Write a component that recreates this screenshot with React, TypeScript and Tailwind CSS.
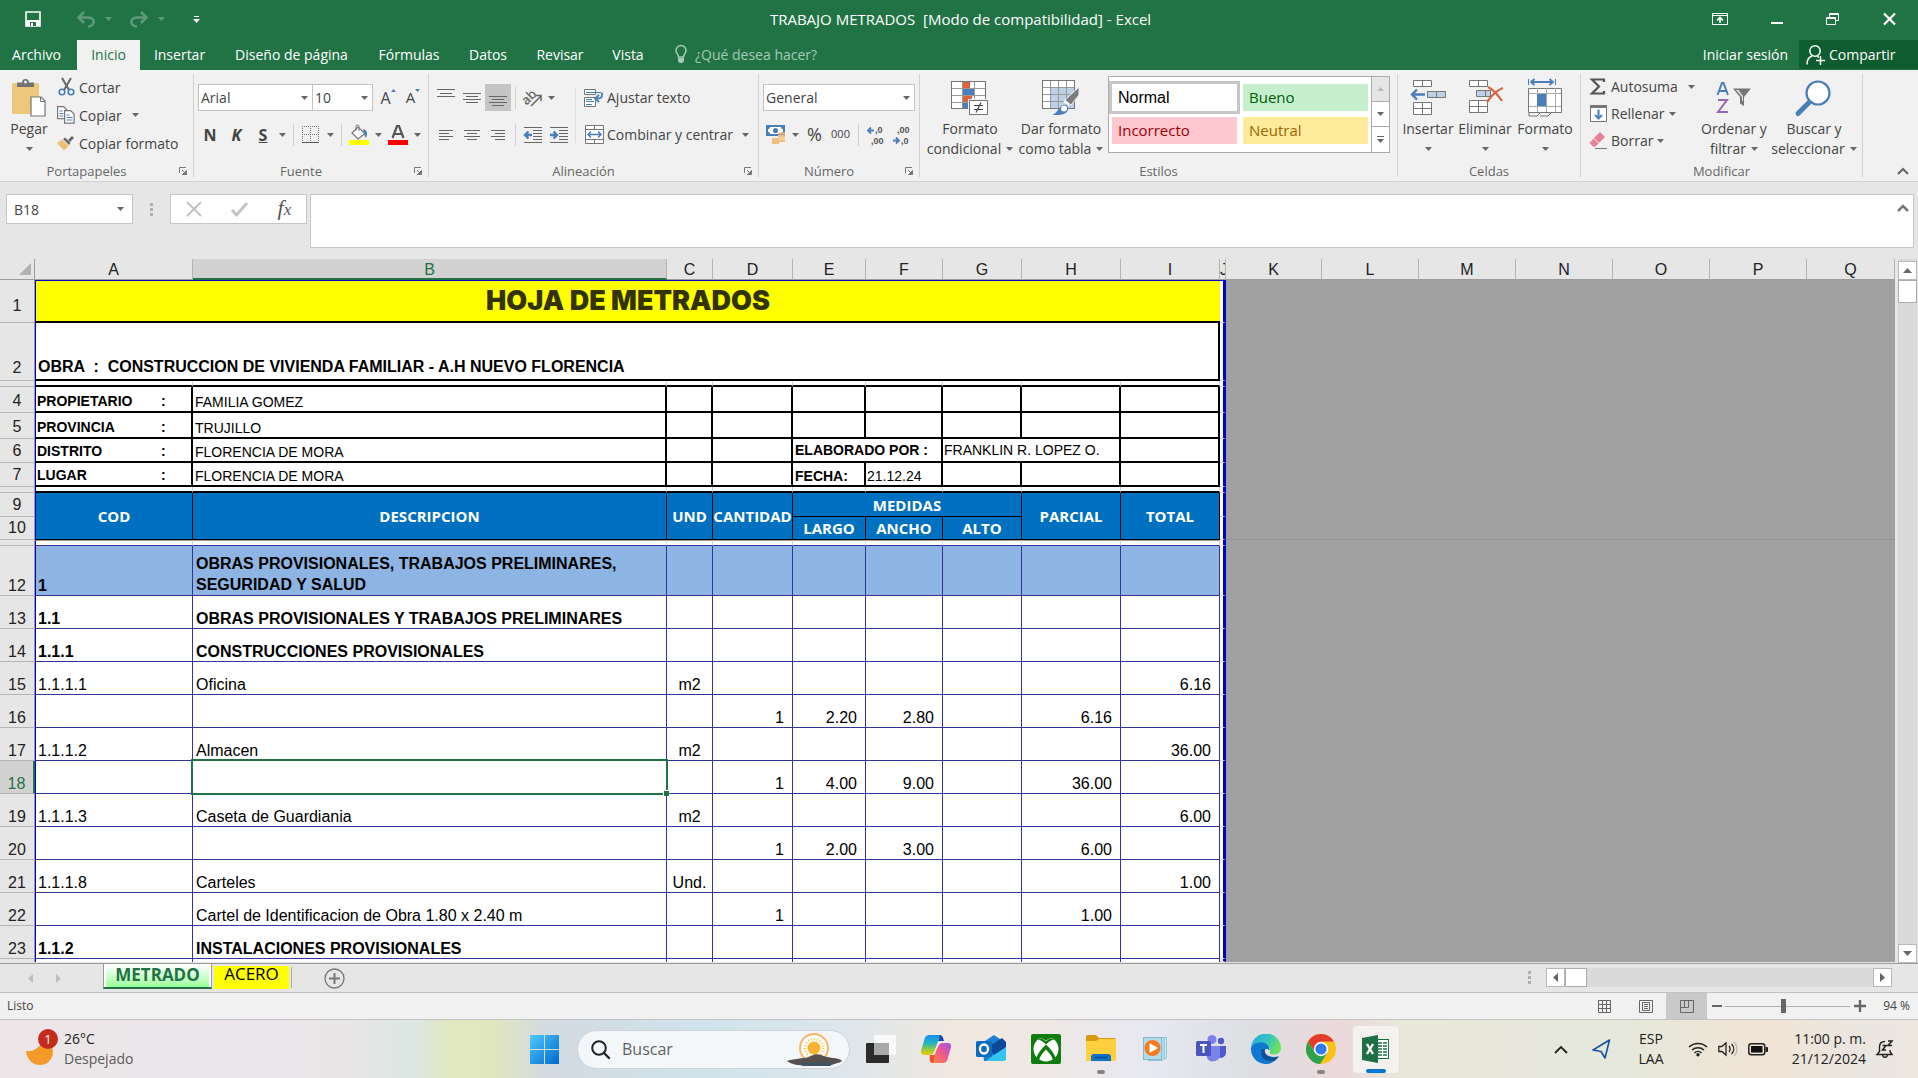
import React from "react";
import clsx from "clsx";

type Kids = { children?: React.ReactNode };

const UI = "font-['Open_Sans',sans-serif]";
const SHEET = "font-['Liberation_Sans',Arial,sans-serif]";

/* ---------- small shared pieces ---------- */

function Caret({ className = "text-[#666]" }: { className?: string }) {
  return (
    <svg width="7" height="4" viewBox="0 0 7 4" className={clsx("shrink-0", className)} aria-hidden="true">
      <path d="M0 0h7L3.500 4z" fill="currentColor" />
    </svg>
  );
}

function Svg({ w, h, children, className }: { w: number; h: number; className?: string } & Kids) {
  return (
    <svg width={w} height={h} viewBox={`0 0 ${w} ${h}`} fill="none" className={clsx("shrink-0 overflow-visible", className)} aria-hidden="true">
      {children}
    </svg>
  );
}

function IconButton({ label, className, children }: { label: string; className: string } & Kids) {
  return (
    <button type="button" aria-label={label} className={clsx("flex h-[27px] shrink-0 items-center justify-center", className)}>
      {children}
    </button>
  );
}

function Divider({ className }: { className: string }) {
  return <span className={clsx("h-[22px] w-px shrink-0 bg-[#d0d0d0]", className)} />;
}

function Group({ label, width, launcher, children }: { label: string; width: string; launcher?: boolean } & Kids) {
  return (
    <>
      <section aria-label={label} className={clsx("flex shrink-0 flex-col", width)}>
        <div className="flex h-[92px]">{children}</div>
        <div className="flex h-[18px] items-center">
          <span className="grow text-center text-[13px] leading-[18px] text-[#666]">{label}</span>
          {launcher && (
            <button type="button" aria-label={`Opciones de ${label}`} className="flex w-5 justify-center">
              <Svg w={8} h={8}>
                <path d="M.5 6V.5H7" stroke="#777" />
                <path d="M3 3l3 3M7.500 3.500v4h-4z" stroke="#777" fill="#777" />
              </Svg>
            </button>
          )}
        </div>
      </section>
      <span className="mt-1 h-[103px] w-px shrink-0 bg-[#d2d2d2]" />
    </>
  );
}

function BigButton({ icon, line1, line2, width }: { icon: React.ReactNode; line1: string; line2?: string; width: string }) {
  return (
    <button type="button" className={clsx("flex shrink-0 flex-col items-center pt-[6px] whitespace-nowrap", width)}>
      <span className="flex h-[43px] items-center justify-center">{icon}</span>
      <span className="text-[14px] leading-5">{line1}</span>
      <span className="flex h-5 items-center justify-center gap-[5px] text-[14px] leading-5">
        {line2}
        <Caret className="text-[#666]" />
      </span>
    </button>
  );
}

function SmallButton({ icon, label, caret, height }: { icon: React.ReactNode; label: string; caret?: string; height: string }) {
  return (
    <button type="button" className={clsx("flex items-center gap-1 text-[14px] whitespace-nowrap", height)}>
      <span className="flex w-[18px] justify-center">{icon}</span>
      <span>{label}</span>
      {caret && (
        <span className={caret}>
          <Caret />
        </span>
      )}
    </button>
  );
}

/* ---------- ribbon icons ---------- */

const G = "#767676";
const B = "#4a7ebb";

function PasteIcon() {
  return (
    <Svg w={36} h={40}>
      <rect x="1" y="5" width="27" height="31" rx="1.500" fill="#ecc77c" />
      <path d="M6 9V4.500h5a3.500 3.500 0 0 1 7 0h5V9z" fill="#737373" />
      <circle cx="14.500" cy="4" r="1.600" fill="#f1f1f1" />
      <path d="M20 19h10l4 4v15H20z" fill="#fff" stroke={G} strokeWidth="1.200" />
      <path d="M29.500 19v4.500H34" stroke={G} />
    </Svg>
  );
}
function CutIcon() {
  return (
    <Svg w={17} h={18}>
      <path d="M4 0l7 12M13 0L6 12" stroke="#666" strokeWidth="2" />
      <circle cx="4" cy="14" r="2.800" stroke={B} strokeWidth="1.600" />
      <circle cx="13" cy="14" r="2.800" stroke={B} strokeWidth="1.600" />
    </Svg>
  );
}
function CopyIcon() {
  return (
    <Svg w={18} h={18}>
      <path d="M.6.600h6l3 3v9h-9z" fill="#fff" stroke={G} strokeWidth="1.200" />
      <path d="M2.500 5h3M2.500 7.500h4M2.500 10h4" stroke={B} />
      <path d="M7.600 4.600h6l3.500 3.500v9H7.600z" fill="#fff" stroke={G} strokeWidth="1.200" />
      <path d="M9.500 9h3M9.500 11.500h6M9.500 14h6" stroke={B} />
    </Svg>
  );
}
function PainterIcon() {
  return (
    <Svg w={18} h={16}>
      <path d="M0 8l5-3.500 7 6.500-5 4.500z" fill="#ecc07a" />
      <path d="M6 4l2-1.500 5.500 5.500-1.500 2z" fill="#666" />
      <path d="M11 5l4-4 2 2-4 4z" fill="#666" />
    </Svg>
  );
}
function LinesIcon({ rows, w = 18 }: { rows: [number, number, number][]; w?: number }) {
  return (
    <Svg w={w} h={18}>
      {rows.map(([x1, x2, y]) => (
        <path key={y} d={`M${x1} ${y}.5H${x2}`} stroke="#666" />
      ))}
    </Svg>
  );
}
function BordersIcon() {
  return (
    <Svg w={17} h={17}>
      <path d="M0 .5h17M0 8.500h17M.5 0v16M8.500 0v16M16.500 0v16" stroke="#777" strokeDasharray="1 1" />
      <path d="M0 16.500h17" stroke="#555" />
    </Svg>
  );
}
function BucketIcon() {
  return (
    <Svg w={20} h={20}>
      <path d="M3 8l6-6 7 6.500-7 5.500z" fill="#fff" stroke={G} strokeWidth="1.200" />
      <path d="M7 6V1.500a1.500 1.500 0 0 1 3 0V6" stroke={G} />
      <path d="M14 4c4 1 5 4 3 9-1-2-2-3-2-5z" fill={B} />
      <path d="M0 15h20v5H0z" fill="#ff0" />
    </Svg>
  );
}
function FontColorIcon() {
  return (
    <Svg w={20} h={20}>
      <path d="M4.500 13L9 1h2l4.500 12M6.300 9h7.400" stroke="#555" strokeWidth="2.200" />
      <path d="M0 15h20v5H0z" fill="#f00" />
    </Svg>
  );
}
function OrientationIcon() {
  return (
    <Svg w={20} h={18}>
      <text x="-1" y="12" transform="rotate(-45 7 9)" fontSize="13" fontWeight="600" fill="#666" fontFamily="Open Sans">ab</text>
      <path d="M8 17L18 7M18 12V6.500h-5" stroke="#666" strokeWidth="1.500" />
    </Svg>
  );
}
function IndentIcon({ right }: { right?: boolean }) {
  return (
    <Svg w={18} h={18}>
      <path d="M0 1.500h18M9 4.500h9M9 7.500h9M9 10.500h9M9 13.500h9M0 16.500h18" stroke="#666" />
      {right ? (
        <path d="M0 9h6M3.500 5.500L7 9l-3.500 3.500" stroke={B} strokeWidth="2.400" />
      ) : (
        <path d="M2 9h6M4.500 5.500L1 9l3.500 3.500" stroke={B} strokeWidth="2.400" />
      )}
    </Svg>
  );
}
function WrapIcon() {
  return (
    <Svg w={20} h={18}>
      <path d="M11.500.5H.5v5h11zM.5 8.500v9h11v-9z" fill="#fff" stroke={G} />
      <path d="M2 3.500h15M2 10.500h6M2 12.500h8M2 15.500h6" stroke={B} />
      <path d="M18 3.500v3c0 2-1 3-5 3M15 6l-4 3.500L15 13" stroke={B} strokeWidth="1.800" />
    </Svg>
  );
}
function MergeIcon() {
  return (
    <Svg w={19} h={19}>
      <path d="M.5.500h18v18H.5zM.5 4.500h18M.5 14.500h18M9.500.5v4M9.500 14.500v4" fill="#fff" stroke={G} />
      <path d="M3 9.500h13M6 6.500l-3 3 3 3M13 6.500l3 3-3 3" stroke={B} strokeWidth="1.500" />
    </Svg>
  );
}
function CurrencyIcon() {
  return (
    <Svg w={20} h={19}>
      <rect x="0" y="0" width="19" height="11" fill={B} />
      <path d="M4 2h11c0 1.500 1 2 2 2v3c-1 0-2 .5-2 2H4C4 7.500 3 7 2 7V4c1 0 2-.5 2-2z" fill="#fff" />
      <circle cx="9.500" cy="5.500" r="2.600" fill={B} />
      <path d="M12 8.500h7M12 11h7M12 13.500h7M12 16h7M6 14h7M6 16h7M6 18h7" stroke="#ecc07a" strokeWidth="1.800" />
    </Svg>
  );
}
function DecimalIcon({ more }: { more?: boolean }) {
  const t = { fontSize: 9, fill: "#555", fontFamily: "Liberation Sans", fontWeight: 700 };
  return more ? (
    <Svg w={17} h={20}>
      <path d="M1 5.500h6M4 2.500l-3 3 3 3" stroke={B} strokeWidth="1.800" />
      <text x="8" y="8" {...t}>,0</text>
      <text x="4" y="19" {...t}>,00</text>
    </Svg>
  ) : (
    <Svg w={17} h={20}>
      <text x="4" y="8" {...t}>,00</text>
      <path d="M0 15.500h6M3 12.500l3 3-3 3" stroke={B} strokeWidth="1.800" />
      <text x="8" y="19" {...t}>,0</text>
    </Svg>
  );
}
function CondFormatIcon() {
  return (
    <Svg w={38} h={36}>
      <rect x=".5" y="1.500" width="34" height="27" fill="#fff" />
      <path d="M0 8.500h35M0 15.500h35M0 22.500h35M11.500 1v28M23.500 1v28" stroke="#999" />
      <path d="M12 2h7v6h-7zM12 16h9v6h-9z" fill="#d9623f" />
      <path d="M12 9h11v6H12zM12 23h5v5h-5z" fill={B} />
      <rect x=".5" y="1.500" width="34" height="27" stroke={G} />
      <rect x="17" y="19" width="21" height="17" fill="#f1f1f1" />
      <rect x="18.500" y="20.500" width="18" height="14" fill="#fff" stroke={G} />
      <path d="M23 25.500h9M23 29.500h9M30 22.500l-5 10" stroke="#444" strokeWidth="1.200" />
    </Svg>
  );
}
function TableFormatIcon() {
  return (
    <Svg w={38} h={36}>
      <rect x=".5" y=".5" width="32" height="28" fill="#fff" />
      <path d="M9 8h24v21H9z" fill="#bdd0e7" />
      <path d="M0 7.500h33M0 14.500h33M0 21.500h33M8.500 0v29M16.500 0v29M24.500 0v29" stroke="#999" />
      <rect x=".5" y=".5" width="32" height="28" stroke={G} />
      <path d="M37 7v8l-8 10-6-5z" fill="#7b7b7b" stroke="#f1f1f1" />
      <path d="M22 21l5 4" stroke="#fff" strokeWidth="2" />
      <path d="M10 35c5-1 6-8 11-10 4-1 6 3 5 5-2 5-8 5-16 5z" fill={B} />
      <circle cx="22" cy="28.500" r="3" fill="#fff" />
    </Svg>
  );
}
function InsertCellsIcon() {
  return (
    <Svg w={37} h={36}>
      <path d="M3.500.5h18v6h-18zM12.500.5v6M3.500 22.500h18v12h-18zM12.500 22.500v12M3.500 28.500h18" fill="#fff" stroke={G} />
      <path d="M17.500 11.500h18v6h-18zM26.500 11.500v6" fill="#bdd0e7" stroke={G} />
      <path d="M2 14.500h13M7 9.500l-5 5 5 5" stroke={B} strokeWidth="2.400" />
    </Svg>
  );
}
function DeleteCellsIcon() {
  return (
    <Svg w={37} h={36}>
      <path d="M2.500.5h18v6h-18zM11.500.5v6M2.500 20.500h18v12h-18zM11.500 20.500v12M2.500 26.500h18" fill="#fff" stroke={G} />
      <path d="M9.500 10.500h14v6h-14zM18.500 10.500v6" fill="#bdd0e7" stroke={G} />
      <path d="M21 7c6 3 10 8 14 14M36 8c-6 2-11 7-16 14" stroke="#d9623f" strokeWidth="2.200" />
    </Svg>
  );
}
function FormatCellsIcon() {
  return (
    <Svg w={35} h={38}>
      <path d="M.5 0v6M27.500 0v6" stroke={B} />
      <path d="M3 3h22M6.500 0L3 3l3.500 3M21.500 0L25 3l-3.500 3" stroke={B} strokeWidth="1.800" />
      <path d="M.5 9.500h33v24H.5z" fill="#fff" stroke={G} />
      <path d="M9.500 9v24M18.500 9v24M27.500 9v24M1 14.500h32M1 27.500h32" stroke="#aaa" />
      <path d="M9 15h9v12H9z" fill={B} />
      <path d="M1 34v3h8l3-3M12 37h8l3-3" stroke={G} />
    </Svg>
  );
}
function SigmaIcon() {
  return (
    <Svg w={16} h={17}>
      <path d="M14 4V1.500H2L9 8.500 2 15.500h12V13" stroke="#555" strokeWidth="2.200" />
    </Svg>
  );
}
function FillIcon() {
  return (
    <Svg w={17} h={18}>
      <path d="M.5.500h16v16H.5z" fill="#fff" stroke={G} />
      <path d="M0 1.500h17" stroke={G} strokeWidth="3" />
      <path d="M8.500 4.500v9M5 10l3.500 3.500L12 10" stroke={B} strokeWidth="2" />
    </Svg>
  );
}
function EraserIcon() {
  return (
    <Svg w={18} h={17}>
      <path d="M11 0l5 5-6 6-5-5z" fill="#e68296" />
      <path d="M4.500 6.500l5 5-3 3-2 .5L.5 11z" fill="#e68296" />
      <path d="M6 16.500h12" stroke="#777" />
    </Svg>
  );
}
function SortIcon() {
  return (
    <Svg w={36} h={34}>
      <path d="M1.500 14L6 2h1.500L12 14M3 10h7.500" stroke={B} strokeWidth="2" />
      <path d="M2 19h9L2 31h10" stroke="#9666b8" strokeWidth="2" />
      <path d="M17 7.500h18L28 16v9l-4-2.500V16z" fill="#767676" />
      <path d="M20 9h2.500L27 15v5.500l-1-1V16z" fill="#fff" opacity=".8" />
    </Svg>
  );
}
function FindIcon() {
  return (
    <Svg w={36} h={36}>
      <path d="M2 33.500L13 22.500" stroke={B} strokeWidth="5" strokeLinecap="round" />
      <circle cx="22" cy="13" r="11.500" fill="#fff" stroke={B} strokeWidth="2.200" />
    </Svg>
  );
}

/* ---------- window chrome ---------- */

function TitleBar() {
  return (
    <div className="flex h-10 items-center bg-[#217346] px-[22px] pb-[2px] text-white">
      <div className="flex flex-1 items-center pl-[3px]">
        <button type="button" aria-label="Guardar">
          <Svg w={16} h={16}>
            <path d="M1 1h14v14H1z" stroke="#fff" strokeWidth="1.600" />
            <path d="M1 9h14v6H1z" fill="#fff" />
            <path d="M5 11h6v4H5z" fill="#217346" />
            <path d="M6 12h2v3H6z" fill="#fff" />
          </Svg>
        </button>
        <button type="button" aria-label="Deshacer" className="ml-9 flex items-center gap-[10px]">
          <Svg w={18} h={16}>
            <path d="M1 6.500h10c8 0 7 9 0 9M7 1L1.500 6.500 7 12" stroke="#5e9a79" strokeWidth="2.600" />
          </Svg>
          <Caret className="text-[#5e9a79]" />
        </button>
        <button type="button" aria-label="Rehacer" className="ml-[18px] flex items-center gap-[10px]">
          <Svg w={18} h={16}>
            <path d="M17 6.500H7c-8 0-7 9 0 9M11 1l5.500 5.500L11 12" stroke="#5e9a79" strokeWidth="2.600" />
          </Svg>
          <Caret className="text-[#5e9a79]" />
        </button>
        <button type="button" aria-label="Personalizar barra" className="ml-[28px] flex flex-col items-center gap-[2px]">
          <span className="h-px w-[5px] bg-white" />
          <Caret className="text-white" />
        </button>
      </div>
      <h1 className="text-[15px] whitespace-pre">{"TRABAJO METRADOS  [Modo de compatibilidad] - Excel"}</h1>
      <div className="flex flex-1 items-center justify-end gap-[43px]">
        <button type="button" aria-label="Opciones de la cinta">
          <Svg w={16} h={12}>
            <path d="M.5.500h15v11H.5zM0 2.500h16" stroke="#fff" />
            <path d="M8 10V4.500M5 7.500l3-3 3 3" stroke="#fff" strokeWidth="1.600" />
          </Svg>
        </button>
        <button type="button" aria-label="Minimizar">
          <Svg w={12} h={12}>
            <path d="M0 10h12" stroke="#fff" strokeWidth="2" />
          </Svg>
        </button>
        <button type="button" aria-label="Restaurar">
          <Svg w={14} h={12}>
            <path d="M.5 4.500h9v7h-9zM0 5.500h10M3.500 4V.5h9v7H10M3 1.500h10" stroke="#fff" />
          </Svg>
        </button>
        <button type="button" aria-label="Cerrar">
          <Svg w={13} h={12}>
            <path d="M1 .5l11 11M12 .5l-11 11" stroke="#fff" strokeWidth="2.200" />
          </Svg>
        </button>
      </div>
    </div>
  );
}

const TABS: [string, string][] = [
  ["Archivo", "w-[77px] pr-1"],
  ["Inicio", "w-[63px]"],
  ["Insertar", "w-[79px]"],
  ["Diseño de página", "w-[145px]"],
  ["Fórmulas", "w-[90px]"],
  ["Datos", "w-[68px]"],
  ["Revisar", "w-[76px]"],
  ["Vista", "w-[60px]"],
];

function TabRow() {
  return (
    <nav aria-label="Cinta" className="flex h-[30px] bg-[#217346] text-[14px] text-white">
      {TABS.map(([name, width]) => (
        <button
          key={name}
          type="button"
          className={clsx("shrink-0 pb-[2px] text-center whitespace-nowrap", width, name === "Inicio" && "bg-[#f1f1f1] text-[#217346]")}
        >
          {name}
        </button>
      ))}
      <button type="button" className="ml-[17px] flex items-center gap-2 pb-[2px] text-[#a5cab5]">
        <Svg w={12} h={18}>
          <path d="M3.500 12C3.500 9.500 1 8.500 1 5.500a5 5 0 0 1 10 0c0 3-2.500 4-2.500 6.500z" stroke="#a5cab5" strokeWidth="1.500" />
          <path d="M3 13h6v3l-1.500 2h-3L3 16z" fill="#a5cab5" />
        </Svg>
        ¿Qué desea hacer?
      </button>
      <div className="grow" />
      <button type="button" className="px-[11px] pb-[2px]">Iniciar sesión</button>
      <button type="button" className="flex h-[29px] w-[119px] items-center gap-1 bg-[#0e5c2f] pl-[7px]">
        <Svg w={19} h={20}>
          <circle cx="9" cy="6" r="5.200" stroke="#fff" strokeWidth="1.500" />
          <path d="M1 19.500c0-5 2-7.500 5-8.500M11 11l2 1.500" stroke="#fff" strokeWidth="1.500" />
          <path d="M10 15.500h9M14.500 11v9" stroke="#fff" strokeWidth="1.500" />
        </Svg>
        Compartir
      </button>
    </nav>
  );
}

function Combo({ label, value, width }: { label: string; value: string; width: string }) {
  return (
    <span className={clsx("grid h-[27px] items-center border border-[#c3c3c3] bg-white", width)}>
      <select aria-label={label} className="col-start-1 row-start-1 w-full appearance-none bg-transparent pl-[2px] text-[14px] text-[#444] outline-none">
        <option>{value}</option>
      </select>
      <span className="pointer-events-none col-start-1 row-start-1 mr-1 justify-self-end">
        <Caret />
      </span>
    </span>
  );
}

function Ribbon() {
  return (
    <div className="flex h-28 border-b border-[#d2d2d2] bg-[#f1f1f1] text-[#444]">
      <Group label="Portapapeles" width="w-[193px]" launcher>
        <div className="ml-1">
          <BigButton icon={<PasteIcon />} line1="Pegar" width="w-[50px]" />
        </div>
        <div className="flex flex-col items-start pt-[3px] pl-[3px]">
          <SmallButton icon={<CutIcon />} label="Cortar" height="h-7" />
          <SmallButton icon={<CopyIcon />} label="Copiar" caret="pl-[6px]" height="h-7" />
          <SmallButton icon={<PainterIcon />} label="Copiar formato" height="h-7" />
        </div>
      </Group>

      <Group label="Fuente" width="w-[234px]" launcher>
        <div className="flex flex-col gap-[10px] pt-[14px] pl-[3px]">
          <div className="flex pl-px">
            <Combo label="Fuente" value="Arial" width="w-[115px]" />
            <Combo label="Tamaño de fuente" value="10" width="w-[60px] border-l-0" />
            <IconButton label="Aumentar tamaño" className="ml-[2px] w-[26px] text-[16px]">
              A<svg width="5" height="3" viewBox="0 0 5 3" className="mt-[5px] self-start"><path d="M0 3h5L2.500 0z" fill={B} /></svg>
            </IconButton>
            <IconButton label="Disminuir tamaño" className="w-[24px] text-[15px]">
              A<svg width="5" height="3" viewBox="0 0 5 3" className="mt-[5px] self-start"><path d="M0 0h5L2.500 3z" fill={B} /></svg>
            </IconButton>
          </div>
          <div className="flex items-center">
            <IconButton label="Negrita" className="w-[26px] text-[16px] font-bold">N</IconButton>
            <IconButton label="Cursiva" className="w-[27px] text-[16px] font-bold italic">K</IconButton>
            <IconButton label="Subrayado" className="w-[26px] text-[16px] font-bold underline">S</IconButton>
            <IconButton label="Más subrayados" className="w-3"><Caret /></IconButton>
            <Divider className="mr-[5px] ml-[5px]" />
            <IconButton label="Bordes" className="w-[22px]"><BordersIcon /></IconButton>
            <IconButton label="Más bordes" className="w-[18px]"><Caret /></IconButton>
            <Divider className="mr-[6px] ml-[2px]" />
            <IconButton label="Color de relleno" className="w-[22px]"><BucketIcon /></IconButton>
            <IconButton label="Más rellenos" className="w-4"><Caret /></IconButton>
            <IconButton label="Color de fuente" className="w-6"><FontColorIcon /></IconButton>
            <IconButton label="Más colores" className="w-[14px]"><Caret /></IconButton>
          </div>
        </div>
      </Group>

      <Group label="Alineación" width="w-[329px]" launcher>
        <div className="flex flex-col gap-[10px] pt-[14px] pl-1">
          <div className="flex items-center">
            <IconButton label="Alinear arriba" className="w-[26px]"><LinesIcon rows={[[0, 18, 0], [3, 15, 4], [0, 18, 7]]} /></IconButton>
            <IconButton label="Alinear al medio" className="w-[26px]"><LinesIcon rows={[[0, 18, 4], [3, 15, 7], [0, 18, 10], [3, 15, 13]]} /></IconButton>
            <IconButton label="Alinear abajo" className="w-[26px] bg-[#c5c5c5]"><LinesIcon rows={[[0, 18, 7], [3, 15, 10], [0, 18, 13], [3, 15, 16]]} /></IconButton>
            <Divider className="mr-[5px] ml-1" />
            <IconButton label="Orientación" className="w-6"><OrientationIcon /></IconButton>
            <IconButton label="Más orientaciones" className="w-3"><Caret /></IconButton>
          </div>
          <div className="flex items-center">
            <IconButton label="Alinear a la izquierda" className="w-[26px]"><LinesIcon w={14} rows={[[0, 14, 4], [0, 10, 7], [0, 14, 10], [0, 10, 13]]} /></IconButton>
            <IconButton label="Centrar" className="w-[26px]"><LinesIcon w={16} rows={[[0, 16, 4], [3, 13, 7], [0, 16, 10], [3, 13, 13]]} /></IconButton>
            <IconButton label="Alinear a la derecha" className="w-[26px]"><LinesIcon w={14} rows={[[0, 14, 4], [4, 14, 7], [0, 14, 10], [4, 14, 13]]} /></IconButton>
            <Divider className="mr-[5px] ml-1" />
            <IconButton label="Disminuir sangría" className="w-6"><IndentIcon /></IconButton>
            <IconButton label="Aumentar sangría" className="ml-[2px] w-6"><IndentIcon right /></IconButton>
          </div>
        </div>
        <span className="mt-[18px] ml-1 h-[55px] w-px bg-[#dcdcdc]" />
        <div className="flex flex-col items-start gap-[10px] pt-[14px] pl-[9px]">
          <SmallButton icon={<WrapIcon />} label="Ajustar texto" height="h-[27px]" />
          <SmallButton icon={<MergeIcon />} label="Combinar y centrar" caret="pl-[5px]" height="h-[27px]" />
        </div>
      </Group>

      <Group label="Número" width="w-[160px]" launcher>
        <div className="flex flex-col gap-[10px] pt-[14px] pl-1">
          <Combo label="Formato de número" value="General" width="w-[152px]" />
          <div className="flex items-center">
            <IconButton label="Formato de moneda" className="w-[26px]"><CurrencyIcon /></IconButton>
            <IconButton label="Más monedas" className="w-3"><Caret /></IconButton>
            <IconButton label="Porcentaje" className="w-[27px] text-[18px]">%</IconButton>
            <IconButton label="Millares" className="w-[25px] text-[11px]">000</IconButton>
            <Divider className="mr-[3px] ml-[5px]" />
            <IconButton label="Aumentar decimales" className="w-[26px]"><DecimalIcon more /></IconButton>
            <IconButton label="Disminuir decimales" className="w-[26px]"><DecimalIcon /></IconButton>
          </div>
        </div>
      </Group>

      <Group label="Estilos" width="w-[477px]">
        <div className="ml-1 flex">
          <BigButton icon={<CondFormatIcon />} line1="Formato" line2="condicional" width="w-[92px]" />
          <BigButton icon={<TableFormatIcon />} line1="Dar formato" line2="como tabla" width="w-[90px]" />
        </div>
        <div className="mt-[6px] ml-[2px] flex h-[77px] w-[282px] border border-[#ababab] bg-white text-[16px]">
          <div className="grid w-[262px] grid-cols-2 content-start">
            <button type="button" className="mt-1 h-[33px] w-[131px] border-[3px] border-[#c6c6c6] pl-[6px] text-left font-['Liberation_Sans'] text-[16px] leading-[27px] text-black">Normal</button>
            <button type="button" className="mt-[7px] ml-[3px] h-[27px] w-[125px] bg-[#c6efce] pl-[6px] text-left text-[15px] leading-[27px] text-[#006100]">Bueno</button>
            <button type="button" className="mt-[3px] ml-[3px] h-[27px] w-[125px] bg-[#ffc7ce] pl-[6px] text-left text-[15px] leading-[27px] text-[#9c0006]">Incorrecto</button>
            <button type="button" className="mt-[3px] ml-[3px] h-[27px] w-[125px] bg-[#ffeb9c] pl-[6px] text-left text-[15px] leading-[27px] text-[#9c6500]">Neutral</button>
          </div>
          <div className="ml-auto grid w-[18px] grid-rows-3 divide-y divide-[#ababab] border-l border-[#ababab]">
            <button type="button" aria-label="Estilos anteriores" className="flex items-center justify-center bg-[#e6e6e6]"><Caret className="rotate-180 text-[#bbb]" /></button>
            <button type="button" aria-label="Estilos siguientes" className="flex items-center justify-center"><Caret /></button>
            <button type="button" aria-label="Más estilos" className="flex flex-col items-center justify-center gap-[2px]"><span className="h-px w-[7px] bg-[#666]" /><Caret /></button>
          </div>
        </div>
      </Group>

      <Group label="Celdas" width="w-[182px]">
        <div className="ml-[2px] flex">
          <BigButton icon={<InsertCellsIcon />} line1="Insertar" width="w-[56px]" />
          <BigButton icon={<DeleteCellsIcon />} line1="Eliminar" width="w-[58px]" />
          <BigButton icon={<FormatCellsIcon />} line1="Formato" width="w-[62px]" />
        </div>
      </Group>

      <Group label="Modificar" width="w-[281px]">
        <div className="flex w-[120px] flex-col items-start pt-[3px] pl-2">
          <SmallButton icon={<SigmaIcon />} label="Autosuma" caret="pl-[6px]" height="h-[27px]" />
          <SmallButton icon={<FillIcon />} label="Rellenar" height="h-[27px]" caret="pl-0" />
          <SmallButton icon={<EraserIcon />} label="Borrar" height="h-[27px]" caret="pl-0" />
        </div>
        <BigButton icon={<SortIcon />} line1="Ordenar y" line2="filtrar" width="w-[66px]" />
        <BigButton icon={<FindIcon />} line1="Buscar y" line2="seleccionar" width="w-[94px]" />
      </Group>
      <div className="flex grow items-end justify-end pr-[9px] pb-[6px]">
        <button type="button" aria-label="Contraer la cinta">
          <Svg w={12} h={8}>
            <path d="M1 7l5-5 5 5" stroke="#666" strokeWidth="2" />
          </Svg>
        </button>
      </div>
    </div>
  );
}

function Dots() {
  return (
    <span className="flex flex-col gap-[2px]" aria-hidden="true">
      <span className="size-[3px] bg-[#b0b0b0]" />
      <span className="size-[3px] bg-[#b0b0b0]" />
      <span className="size-[3px] bg-[#b0b0b0]" />
    </span>
  );
}

function FormulaBar() {
  return (
    <div className="flex items-start bg-[#e6e6e6] pt-3 pr-1 pb-[11px] pl-[6px] text-[#444]">
      <span className="flex h-[30px] w-[127px] items-center border border-[#c6c6c6] bg-white pr-[8px]">
        <input aria-label="Cuadro de nombres" defaultValue="B18" className="w-full min-w-0 bg-transparent pl-[7px] text-[14px] outline-none" />
        <Caret />
      </span>
      <span className="flex h-[30px] w-[37px] items-center justify-center">
        <Dots />
      </span>
      <span className="flex h-[30px] w-[137px] items-center justify-around border border-[#c6c6c6] bg-white">
        <button type="button" aria-label="Cancelar">
          <Svg w={16} h={16}><path d="M1 1l14 14M15 1L1 15" stroke="#c4c4c4" strokeWidth="2" /></Svg>
        </button>
        <button type="button" aria-label="Introducir">
          <Svg w={17} h={16}><path d="M1 9l4.500 5L16 2" stroke="#c4c4c4" strokeWidth="3" /></Svg>
        </button>
        <button type="button" aria-label="Insertar función" className="font-['Liberation_Serif'] text-[22px] leading-5 text-[#555] italic">
          f<span className="text-[17px]">x</span>
        </button>
      </span>
      <span className="ml-[3px] flex h-[54px] grow items-start border border-[#c6c6c6] bg-white">
        <textarea aria-label="Barra de fórmulas" className="h-full grow resize-none p-1 text-[14px] outline-none" />
        <button type="button" aria-label="Contraer barra de fórmulas" className="mt-[9px] mr-[4px]">
          <Svg w={12} h={8}><path d="M1 7l5-5 5 5" stroke="#777" strokeWidth="2.500" /></Svg>
        </button>
      </span>
    </div>
  );
}

/* ---------- worksheet ---------- */

const COLS = [
  ["A", "w-[158px]"],
  ["B", "w-[474px]"],
  ["C", "w-[46px]"],
  ["D", "w-[80px]"],
  ["E", "w-[73px]"],
  ["F", "w-[77px]"],
  ["G", "w-[79px]"],
  ["H", "w-[99px]"],
  ["I", "w-[99px]"],
  ["J", "w-[6px]"],
  ["K", "w-[96px]"],
  ["L", "w-[97px]"],
  ["M", "w-[97px]"],
  ["N", "w-[97px]"],
  ["O", "w-[97px]"],
  ["P", "w-[97px]"],
  ["Q", ""],
];

function RowHead({ n, height, pad }: { n: number | string; height: string; pad?: string }) {
  const active = n === 18;
  return (
    <th
      scope="row"
      className={clsx(
        "overflow-hidden border-b border-b-[#b4b4b4] p-0 text-center align-bottom text-[16px] leading-[18px] font-normal",
        height,
        pad,
        active ? "border-r-2 border-r-[#217346] bg-[#d2d2d2] text-[#217346]" : "border-r border-r-[#9b9b9b] bg-[#e6e6e6] text-[#222]",
      )}
    >
      {n}
    </th>
  );
}

function EdgeCell() {
  return <td className="border-r-[3px] border-b border-r-[#0000c8] border-b-[#dcdcdc] bg-white p-0" />;
}

function ThinRow({ kind, children }: { kind: "black" | "freeze" } & Kids) {
  const black = kind === "black";
  return (
    <tr className="text-[0px] leading-[0]">
      <th className="h-[6px] border-r border-b border-r-[#9b9b9b] border-b-[#b4b4b4] bg-[#e6e6e6] p-0" />
      {COLS.slice(0, 9).map(([c]) => (
        <td
          key={c}
          className={clsx(
            "h-[6px] border-r border-r-[#d4d4d4] bg-white p-0",
            black ? "border-b-2 border-b-black" : "border-t border-b border-t-[#9b9b9b] border-b-[#333399]",
            c === "A" && "border-l border-l-[#0000c8]",
          )}
        />
      ))}
      <EdgeCell />
      {children}
    </tr>
  );
}

const K = "border-r-2 border-b-2 border-black bg-white p-0 text-[14px] leading-[18px] whitespace-nowrap";
const H = "border-r border-black bg-[#0070c0] p-0 text-center text-[15px] leading-5 font-bold text-white";
const D = "border-r border-b border-[#333399] p-0 align-bottom text-[16px] leading-[18px] whitespace-nowrap";

function InfoRow({ n, height, label, value, children }: { n: number; height: string; label: string; value: string } & Kids) {
  return (
    <tr>
      <RowHead n={n} height={height} pad="pb-[2px]" />
      <td className={clsx(K, "border-l border-l-[#0000c8] pb-px align-bottom font-bold")}>
        <span className="flex">
          <span className="w-[125px] pl-px">{label}</span>:
        </span>
      </td>
      <td className={clsx(K, "pl-[2px] align-bottom")}>{value}</td>
      <td className={K} />
      <td className={K} />
      {children}
      <td className={K} />
      <EdgeCell />
    </tr>
  );
}

type Row = { n: number; cells: string[]; bold?: boolean };
const ROWS: Row[] = [
  { n: 13, bold: true, cells: ["1.1", "OBRAS PROVISIONALES Y TRABAJOS PRELIMINARES"] },
  { n: 14, bold: true, cells: ["1.1.1", "CONSTRUCCIONES PROVISIONALES"] },
  { n: 15, cells: ["1.1.1.1", "Oficina", "m2", "", "", "", "", "", "6.16"] },
  { n: 16, cells: ["", "", "", "1", "2.20", "2.80", "", "6.16"] },
  { n: 17, cells: ["1.1.1.2", "Almacen", "m2", "", "", "", "", "", "36.00"] },
  { n: 18, cells: ["", "", "", "1", "4.00", "9.00", "", "36.00"] },
  { n: 19, cells: ["1.1.1.3", "Caseta de Guardiania", "m2", "", "", "", "", "", "6.00"] },
  { n: 20, cells: ["", "", "", "1", "2.00", "3.00", "", "6.00"] },
  { n: 21, cells: ["1.1.1.8", "Carteles", "Und.", "", "", "", "", "", "1.00"] },
  { n: 22, cells: ["", "Cartel de Identificacion de Obra 1.80 x 2.40 m", "", "1", "", "", "", "1.00"] },
  { n: 23, bold: true, cells: ["1.1.2", "INSTALACIONES PROVISIONALES"] },
];

function DataRow({ row }: { row: Row }) {
  return (
    <tr>
      <RowHead n={row.n} height="h-[33px]" />
      {COLS.slice(0, 9).map(([c], i) => (
        <td
          key={c}
          className={clsx(
            D,
            "bg-white",
            row.bold && "font-bold",
            i === 0 && "border-l border-l-[#0000c8] pl-[2px]",
            i === 1 && "pl-[3px]",
            i === 2 && "text-center",
            i > 2 && "pr-2 text-right",
            row.n === 18 && i === 1 && "relative",
          )}
        >
          {row.cells[i]}
          {row.n === 18 && i === 1 && (
            <span className="absolute -inset-x-[2px] -top-[2px] -bottom-[2px] border-2 border-[#217346]">
              <span className="absolute -right-[3px] -bottom-[3px] size-[6px] border-t border-l border-white bg-[#217346]" />
            </span>
          )}
        </td>
      ))}
      <EdgeCell />
    </tr>
  );
}

function Sheet() {
  return (
    <div className={clsx("min-w-0 flex-1 overflow-hidden", SHEET)}>
      <table className="w-full table-fixed border-separate border-spacing-0 text-black">
        <colgroup>
          <col className="w-[35px]" />
          {COLS.map(([c, w]) => (
            <col key={c} className={w} />
          ))}
        </colgroup>
        <thead>
          <tr>
            <td className="h-[21px] border-r border-b border-[#9b9b9b] bg-[#e6e6e6] p-0 align-bottom">
              <Svg w={12} h={12} className="mb-1 ml-auto mr-[3px]"><path d="M12 0v12H0z" fill="#b1b1b1" /></Svg>
            </td>
            {COLS.map(([c]) => (
              <th
                key={c}
                scope="col"
                className={clsx(
                  "h-[21px] overflow-hidden border-r border-r-[#b4b4b4] p-0 text-center align-bottom text-[16px] font-normal",
                  c === "B" ? "border-b-2 border-b-[#217346] bg-[#d2d2d2] leading-[16px] text-[#217346]" : "border-b border-b-[#9b9b9b] bg-[#e6e6e6] leading-[18px] text-[#222]",
                )}
              >
                {c}
              </th>
            ))}
          </tr>
        </thead>
        <tbody>
          <tr>
            <RowHead n={1} height="h-[43px]" pad="pb-[7px]" />
            <td colSpan={9} className="border-t border-b-2 border-l border-t-[#0000c8] border-b-black border-l-[#0000c8] bg-[#ffff00] p-0 text-center font-['Inter'] text-[27px] leading-[30px] font-black text-[#333300]">
              HOJA DE METRADOS
            </td>
            <td className="border-t border-r-[3px] border-b border-t-[#0000c8] border-r-[#0000c8] border-b-[#dcdcdc] bg-white p-0" />
            <td colSpan={7} rowSpan={10} className="border-b border-[#949494] bg-[#a0a0a0] p-0" />
          </tr>
          <tr>
            <RowHead n={2} height="h-[58px]" pad="pb-[3px]" />
            <td colSpan={9} className="border-r-2 border-b-2 border-l border-black border-l-[#0000c8] bg-white p-0 pb-[3px] pl-[2px] align-bottom text-[16px] leading-[18px] font-bold whitespace-pre">
              {"OBRA  :  CONSTRUCCION DE VIVIENDA FAMILIAR - A.H NUEVO FLORENCIA"}
            </td>
            <EdgeCell />
          </tr>
          <ThinRow kind="black" />
          <InfoRow n={4} height="h-[26px]" label="PROPIETARIO" value="FAMILIA GOMEZ">
            <td className={K} /><td className={K} /><td className={K} /><td className={K} />
          </InfoRow>
          <InfoRow n={5} height="h-[26px]" label="PROVINCIA" value="TRUJILLO">
            <td className={K} /><td className={K} /><td className={K} /><td className={K} />
          </InfoRow>
          <InfoRow n={6} height="h-[24px]" label="DISTRITO" value="FLORENCIA DE MORA">
            <td colSpan={2} className={clsx(K, "border-r-0 pl-[2px] font-bold")}>ELABORADO POR :</td>
            <td colSpan={2} className={clsx(K, "pl-px")}>FRANKLIN R. LOPEZ O.</td>
          </InfoRow>
          <InfoRow n={7} height="h-[24px]" label="LUGAR" value="FLORENCIA DE MORA">
            <td className={clsx(K, "pl-[2px] align-bottom font-bold")}>FECHA:</td>
            <td className={clsx(K, "pl-px align-bottom")}>21.12.24</td>
            <td className={K} /><td className={K} />
          </InfoRow>
          <ThinRow kind="black" />
          <tr className={UI}>
            <RowHead n={9} height="h-[24px]" pad="pb-[2px] font-['Liberation_Sans']" />
            <th rowSpan={2} className={clsx(H, "border-b border-l border-l-[#0000c8]")}>COD</th>
            <th rowSpan={2} className={clsx(H, "border-b")}>DESCRIPCION</th>
            <th rowSpan={2} className={clsx(H, "border-b")}>UND</th>
            <th rowSpan={2} className={clsx(H, "border-b")}>CANTIDAD</th>
            <th colSpan={3} className={clsx(H, "border-b")}>MEDIDAS</th>
            <th rowSpan={2} className={clsx(H, "border-b")}>PARCIAL</th>
            <th rowSpan={2} className={clsx(H, "border-b")}>TOTAL</th>
            <EdgeCell />
          </tr>
          <tr className={UI}>
            <RowHead n={10} height="h-[23px]" pad="pb-[2px] font-['Liberation_Sans']" />
            <th className={clsx(H, "border-b")}>LARGO</th>
            <th className={clsx(H, "border-b")}>ANCHO</th>
            <th className={clsx(H, "border-b")}>ALTO</th>
            <EdgeCell />
          </tr>
          <ThinRow kind="freeze">
            <td colSpan={7} rowSpan={14} className="bg-[#a0a0a0] p-0" />
          </ThinRow>
          <tr>
            <RowHead n={12} height="h-[50px]" />
            <td className={clsx(D, "border-l border-l-[#0000c8] bg-[#8db4e2] pl-[2px] font-bold")}>1</td>
            <td className={clsx(D, "bg-[#8db4e2] pl-[3px] leading-[21px] font-bold")}>
              OBRAS PROVISIONALES, TRABAJOS PRELIMINARES,
              <br />
              SEGURIDAD Y SALUD
            </td>
            {COLS.slice(2, 9).map(([c]) => (
              <td key={c} className={clsx(D, "bg-[#8db4e2]")} />
            ))}
            <EdgeCell />
          </tr>
          {ROWS.map((r) => (
            <DataRow key={r.n} row={r} />
          ))}
          <tr className="text-[0px] leading-[0]">
            <th className="h-[3px] border-r border-[#9b9b9b] bg-[#e6e6e6] p-0" />
            {COLS.slice(0, 9).map(([c]) => (
              <td key={c} className={clsx("border-r border-[#333399] bg-white p-0", c === "A" && "border-l border-l-[#0000c8]")} />
            ))}
            <EdgeCell />
          </tr>
        </tbody>
      </table>
    </div>
  );
}

function ScrollButton({ label, turn }: { label: string; turn: string }) {
  return (
    <button type="button" aria-label={label} className="flex size-[19px] shrink-0 items-center justify-center border border-[#b8b8b8] bg-white">
      <svg width="9" height="5" viewBox="0 0 9 5" className={turn} aria-hidden="true"><path d="M0 0h9L4.500 5z" fill="#666" /></svg>
    </button>
  );
}

function SheetTabs() {
  return (
    <div className="flex h-[30px] border-t border-b border-t-[#9b9b9b] border-b-[#c2c2c2] bg-[#e6e6e6]">
      <div className="flex w-[103px] items-center gap-[23px] pl-[28px]">
        <button type="button" aria-label="Hoja anterior"><Svg w={5} h={9}><path d="M5 0v9L0 4.500z" fill="#bdbdbd" /></Svg></button>
        <button type="button" aria-label="Hoja siguiente"><Svg w={5} h={9}><path d="M0 0v9l5-4.500z" fill="#bdbdbd" /></Svg></button>
      </div>
      <button type="button" className="h-[25px] w-[109px] border-x border-b-2 border-x-[#9b9b9b] border-b-[#217346] bg-white px-[2px] text-[17px] leading-[20px] font-bold text-[#217346]">
        <span className="block h-[22px] bg-linear-to-b from-white to-[#99ff99]">METRADO</span>
      </button>
      <button type="button" className="mt-[2px] ml-[2px] h-[23px] w-[75px] bg-[#ffff00] text-[17px] leading-[16px] text-black">
        <span className="block h-[23px]">ACERO</span>
      </button>
      <span className="mt-[3px] ml-[2px] h-[21px] w-px bg-[#ababab]" />
      <button type="button" aria-label="Hoja nueva" className="ml-[32px]">
        <Svg w={21} h={21}><circle cx="10.500" cy="10.500" r="9.500" stroke="#777" strokeWidth="1.300" /><path d="M5 10.500h11M10.500 5v11" stroke="#777" strokeWidth="2" /></Svg>
      </button>
      <div className="grow" />
      <div className="flex items-center pr-[26px] pb-px">
        <Dots />
        <span className="w-[15px]" />
        <ScrollButton label="Desplazar a la izquierda" turn="rotate-90" />
        <span className="flex h-[19px] w-[308px] bg-[#dadada]">
          <span className="w-[22px] border border-[#ababab] bg-white" />
        </span>
        <ScrollButton label="Desplazar a la derecha" turn="-rotate-90" />
      </div>
    </div>
  );
}

function StatusBar() {
  return (
    <div className="flex h-[27px] items-center border-b border-[#c2c2c2] bg-[#f1f1f1] pl-[7px] text-[12px] text-[#444]">
      <span>Listo</span>
      <div className="grow" />
      <button type="button" aria-label="Normal" className="flex w-[41px] justify-center">
        <Svg w={13} h={13}><path d="M.5.500h12v12H.5zM4.500 0v13M8.500 0v13M0 4.500h13M0 8.500h13" stroke="#666" /></Svg>
      </button>
      <button type="button" aria-label="Diseño de página" className="flex w-[41px] justify-center">
        <Svg w={14} h={13}><path d="M.5.500h13v12H.5zM3.500 2.500h7v8h-7zM5 4.500h4M5 6.500h4M5 8.500h4" stroke="#666" /></Svg>
      </button>
      <button type="button" aria-label="Vista previa de salto de página" className="flex h-[26px] w-[41px] items-center justify-center bg-[#c9c9c9]">
        <Svg w={14} h={13}><path d="M.5.500h13v12H.5zM.5 7.500h8V1M4.500 1v6.500" stroke="#666" /></Svg>
      </button>
      <button type="button" aria-label="Alejar" className="ml-[5px]"><Svg w={10} h={12}><path d="M0 6h10" stroke="#666" strokeWidth="2" /></Svg></button>
      <input
        type="range"
        aria-label="Zoom"
        defaultValue={47}
        className="mx-[3px] h-[14px] w-[125px] appearance-none bg-[linear-gradient(#b0b0b0,#b0b0b0)] bg-[length:100%_1px] bg-center bg-no-repeat [&::-webkit-slider-thumb]:h-[14px] [&::-webkit-slider-thumb]:w-[5px] [&::-webkit-slider-thumb]:appearance-none [&::-webkit-slider-thumb]:bg-[#666]"
      />
      <button type="button" aria-label="Acercar" className="ml-px"><Svg w={12} h={12}><path d="M0 6h12M6 0v12" stroke="#666" strokeWidth="2.400" /></Svg></button>
      <span className="w-[52px] pr-[8px] text-right whitespace-nowrap">94 %</span>
    </div>
  );
}

/* ---------- taskbar ---------- */

function AppIcon({ name }: { name: string }) {
  switch (name) {
    case "Vista de tareas":
      return (
        <Svg w={30} h={30}>
          <rect x="0" y="9" width="23" height="20" rx="1" fill="#2b2b2b" />
          <rect x="8" y="1" width="22" height="20" rx="1" fill="#fff" fillOpacity=".75" />
          <path d="M8 9h15v12H8z" fill="#a9a9a9" />
        </Svg>
      );
    case "Copilot":
      return (
        <svg width="30" height="28" viewBox="0 0 30 28" aria-hidden="true">
          <defs>
            <linearGradient id="cpa" x1="0" y1="0" x2="0" y2="1"><stop stopColor="#1a8fe8" /><stop offset=".4" stopColor="#1fb5c4" /><stop offset=".7" stopColor="#8ccb4a" /><stop offset="1" stopColor="#f5c400" /></linearGradient>
            <linearGradient id="cpb" x1="1" y1="0" x2="0" y2="1"><stop stopColor="#9a55ee" /><stop offset=".5" stopColor="#ee5a8c" /><stop offset="1" stopColor="#ff8a3c" /></linearGradient>
          </defs>
          <path d="M16 0h3c2 0 3 2 4 6h-6z" fill="#1c3fb8" />
          <path d="M8 0h9c2 0 2 1 1 4l-5 13c-1 2-2 3-4 3H4c-4 0-5-2-3.500-6l3-10C4.500 1 6 0 8 0z" fill="url(#cpa)" />
          <path d="M22 28h-9c-2 0-2-1-1-4l5-13c1-2 2-3 4-3h5c4 0 5 2 3.500 6l-3 10c-1 3-2.500 4-4.500 4z" fill="url(#cpb)" />
          <path d="M9 20h5l-2 8h-1c-2 0-3-4-2-8z" fill="#f0502c" />
          <path d="M17 8h4c-2 0-3 1-4 3l-4 9H9c2 0 3-1 4-3z" fill="#f4eef0" />
        </svg>
      );
    case "Outlook":
      return (
        <Svg w={30} h={28}>
          <path d="M6 8L18 0l12 8v14a4 4 0 0 1-4 4H8z" fill="#1f7fd6" />
          <path d="M30 10v13a3 3 0 0 1-3 3H10l20-16z" fill="#35c3f3" />
          <path d="M12 12l14-9 4 4v5L18 20z" fill="#0d4a9c" />
          <rect y="6" width="16" height="16" rx="1.500" fill="#0f6cbd" />
          <ellipse cx="8" cy="14" rx="4" ry="4.500" stroke="#fff" strokeWidth="2.400" />
        </Svg>
      );
    case "Xbox":
      return (
        <Svg w={30} h={30}>
          <rect width="30" height="30" rx="2" fill="#107c10" />
          <circle cx="15" cy="15" r="12.500" fill="#fff" />
          <path d="M7.500 4.500C10 3.500 13 5 15 6.500c2-1.500 5-3 7.500-2L21 2H9z" fill="#107c10" />
          <path d="M7 5.500c3 .5 5.500 2.500 8 5 2.500-2.500 5-4.500 8-5l-1.500-1C19 4 17 5.500 15 7c-2-1.500-4-3-6.500-2.500z" fill="#107c10" />
          <path d="M15 10.500c5 4.500 8.500 9.500 9.500 13.500L22 26c-1-3.500-4-7.500-7-10.500C12 18.500 9 22.500 8 26l-2.500-2c1-4 4.500-9 9.500-13.500z" fill="#107c10" />
        </Svg>
      );
    case "Explorador de archivos":
      return (
        <Svg w={30} h={28}>
          <path d="M0 2a2 2 0 0 1 2-2h8l3 3h15a2 2 0 0 1 2 2v6H0z" fill="#d9970c" />
          <path d="M0 6h10l3-2h17v20a2 2 0 0 1-2 2H0z" fill="#ffcf3d" />
          <path d="M5 26v-4a3 3 0 0 1 3-3h14a3 3 0 0 1 3 3v4z" fill="#1271c4" />
          <path d="M9 22.500h12" stroke="#0b4f91" strokeWidth="1.500" />
        </Svg>
      );
    case "Reproductor":
      return (
        <Svg w={26} h={26}>
          <path d="M5 1h19v21l-5 3H5z" fill="#8fc5dc" />
          <path d="M20 2v22M22.500 2v20" stroke="#d9eef5" />
          <rect x=".5" y="1.500" width="18" height="22" fill="#b5dbe9" stroke="#84b9cf" />
          <circle cx="9.500" cy="12" r="8" fill="#f47b20" />
          <path d="M6.500 7v10l8.500-5z" fill="#fff" />
        </Svg>
      );
    case "Teams":
      return (
        <Svg w={30} h={28}>
          <circle cx="16" cy="4.500" r="4.500" fill="#7b83eb" />
          <circle cx="25" cy="6" r="3.200" fill="#5059c9" />
          <path d="M20 11h10v7a5 5 0 0 1-7 4.500z" fill="#5059c9" />
          <path d="M10 11h14v8a7 7 0 0 1-13 4z" fill="#7b83eb" />
          <rect y="6" width="15" height="15" rx="1.500" fill="#4b53bc" />
          <path d="M4 10h7M7.500 10v8" stroke="#fff" strokeWidth="2" />
        </Svg>
      );
    case "Edge":
      return (
        <svg width="30" height="30" viewBox="0 0 30 30" aria-hidden="true">
          <defs>
            <linearGradient id="eda" x1="0" y1="0" x2="1" y2=".4"><stop stopColor="#2aa7e0" /><stop offset=".6" stopColor="#34c5c0" /><stop offset="1" stopColor="#6be05c" /></linearGradient>
          </defs>
          <path d="M0 15a15 15 0 0 1 30-1c0 4-3 6.500-7 6.500-3 0-5-1-4-3 1-3-1-6-5-6-6 0-10 3-14 3.500z" fill="url(#eda)" />
          <path d="M0 14.500C1 10 6 8 11 8.500c5 .5 8 4 7.500 8-5-5-11 5 4 6.500l5-.5C25 27 20.500 30 15 30A15 15 0 0 1 0 14.500z" fill="#0f78d0" />
          <path d="M11 15c-3 8 3 13 11 12 3-1 5-3 6-5-3 2-7 2-10 .5-3-1.500-5-4-4-7.500z" fill="#114f94" />
        </svg>
      );
    case "Chrome":
      return (
        <Svg w={30} h={30}>
          <circle cx="15" cy="15" r="15" fill="#fbc116" />
          <path d="M2 7.500A15 15 0 0 1 28 7.500H15L9 18z" fill="#e33b2e" />
          <path d="M2 7.500A15 15 0 0 0 14 30l7.500-11.500L9 18.500z" fill="#2ba24c" />
          <circle cx="15" cy="15" r="7.200" fill="#fff" />
          <circle cx="15" cy="15" r="5.600" fill="#2f7de9" />
        </Svg>
      );
    default:
      return (
        <Svg w={28} h={28}>
          <rect x="14.500" y="4.500" width="12" height="19" fill="#fff" stroke="#1d7044" />
          <path d="M16 8h4M21 8h4M16 11h4M21 11h4M16 14h4M21 14h4M16 17h4M21 17h4M16 20h4M21 20h4" stroke="#1d7044" strokeWidth="1.600" />
          <path d="M0 3l16-3v28L0 25z" fill="#1d7044" />
          <path d="M5 9l6 10M11 9L5 19" stroke="#fff" strokeWidth="2.400" />
        </Svg>
      );
  }
}

const APPS = ["Vista de tareas", "Copilot", "Outlook", "Xbox", "Explorador de archivos", "Reproductor", "Teams", "Edge", "Chrome", "Excel"];

function Taskbar() {
  return (
    <footer className="flex h-[58px] shrink-0 items-center bg-[linear-gradient(90deg,#ece6e7_0%,#ebe6ec_14%,#e9e6e6_18%,#dbe7e4_21.5%,#e1e7c0_23.5%,#e1e7bd_25.5%,#d3dae2_28.5%,#d0e3eb_37%,#dde6ec_44%,#f1e8df_50%,#f0e8e2_53%,#e7e8f1_60%,#dddfe3_65%,#ecd8da_70%,#e8e8db_73%,#e6e8db_85%,#f1e4d6_92%,#eae6e0_97%,#ece8e0_100%)] text-[14px] text-[#222]">
      <button type="button" className="flex w-[530px] items-center gap-[9px] pl-[26px] text-left">
        <Svg w={29} h={34}>
          <path d="M0 19c7 1 14-3 17-11 6 2 10 6 10 12a13 13 0 0 1-13 13C7 33 1 28 0 19z" fill="#f39a2b" />
          <circle cx="22" cy="7" r="10" fill="#c42b1c" />
          <text x="22" y="12" textAnchor="middle" fontSize="13" fill="#fff" fontFamily="Open Sans">1</text>
        </Svg>
        <span className="flex flex-col leading-5">
          <span>26°C</span>
          <span className="text-[#5a5a5a]">Despejado</span>
        </span>
      </button>
      <button type="button" aria-label="Inicio">
        <svg width="29" height="29" viewBox="0 0 29 29" aria-hidden="true">
          <defs><linearGradient id="win" x1="0" y1="0" x2="1" y2="1"><stop stopColor="#4fcbff" /><stop offset="1" stopColor="#0067c8" /></linearGradient></defs>
          <path d="M0 0h14v14H0zM15 0h14v14H15zM0 15h14v14H0zM15 15h14v14H15z" fill="url(#win)" />
        </svg>
      </button>
      <label className="ml-[18px] flex h-[39px] w-[273px] shrink-0 items-center rounded-full border border-[#cdd3da] bg-[#f4f7fa] pr-[7px] pl-[13px]">
        <Svg w={19} h={19}><circle cx="8" cy="8" r="6.800" stroke="#222" strokeWidth="2" /><path d="M13 13l5 5" stroke="#222" strokeWidth="2.400" strokeLinecap="round" /></Svg>
        <input placeholder="Buscar" aria-label="Buscar" className="ml-[12px] w-0 grow bg-transparent text-[16px] outline-none placeholder:text-[#5f6368]" />
        <Svg w={55} h={33}>
          <circle cx="27" cy="15" r="14" fill="#fff" stroke="#f6b66a" strokeWidth="2" />
          <circle cx="27" cy="15" r="9" stroke="#f8c94a" strokeWidth="3" strokeDasharray="1 2" />
          <circle cx="27" cy="15" r="6.500" fill="#f8b333" />
          <path d="M0 28c8-3 18-2 24-5 6-4 11 0 16 1s13 1 15 4c-4 3-8 2-12 5H18c-5-1-14-1-18-5z" fill="#56504f" />
          <path d="M10 31c9-3 23-2 36-1l-3 3H18z" fill="#3f5365" />
        </Svg>
      </label>
      <div className="ml-[3px] flex">
        {APPS.map((name) => (
          <button key={name} type="button" aria-label={name} className="flex w-[55px] justify-center">
            <span className={clsx("relative flex h-[49px] w-12 items-center justify-center rounded-[4px]", name === "Excel" && "border border-[#e6dfdc] bg-[#f5f1ee]")}>
              <AppIcon name={name} />
              {name === "Excel" && <span className="absolute bottom-0 h-[4px] w-5 rounded-full bg-[#0078d4]" />}
              {(name === "Chrome" || name === "Explorador de archivos") && <span className="absolute bottom-0 h-[4px] w-2 rounded-full bg-[#858585]" />}
            </span>
          </button>
        ))}
      </div>
      <div className="grow" />
      <button type="button" aria-label="Iconos ocultos"><Svg w={14} h={9}><path d="M1 8l6-6 6 6" stroke="#222" strokeWidth="1.800" /></Svg></button>
      <button type="button" aria-label="Ubicación" className="ml-[24px]"><Svg w={19} h={20}><path d="M17.500 1L1 11l8 1.500L13 19z" stroke="#1652a6" strokeWidth="1.600" strokeLinejoin="round" /></Svg></button>
      <button type="button" className="ml-[20px] w-10 text-center leading-5">ESP<br />LAA</button>
      <button type="button" aria-label="Red, volumen y batería" className="ml-[17px] flex items-center gap-[10px]">
        <Svg w={20} h={16}>
          <path d="M1 6a13 13 0 0 1 18 0M4 9a9 9 0 0 1 12 0M6.500 12a5 5 0 0 1 7 0" stroke="#222" strokeWidth="1.500" />
          <circle cx="10" cy="13.800" r="1.700" fill="#222" />
        </Svg>
        <Svg w={20} h={16}>
          <path d="M.8 5.500h3L8 2v12l-4.200-3.500h-3z" stroke="#222" strokeWidth="1.300" />
          <path d="M11 5c1.500 2 1.500 4 0 6M13.500 3c3 3 3 7 0 10" stroke="#222" strokeWidth="1.300" />
          <path d="M16 1c4 4 4 10 0 14" stroke="#b5b5b5" strokeWidth="1.300" />
        </Svg>
        <Svg w={20} h={13}>
          <rect x=".8" y=".8" width="16" height="11" rx="2.500" stroke="#222" strokeWidth="1.500" />
          <rect x="3" y="3" width="11.500" height="6.600" fill="#111" />
          <path d="M18 4.500h1.500v4H18z" fill="#222" stroke="#222" />
        </Svg>
      </button>
      <button type="button" className="ml-[16px] w-[82px] text-right leading-5 whitespace-nowrap">11:00 p. m.<br />21/12/2024</button>
      <button type="button" aria-label="Notificaciones" className="mr-[24px] ml-[10px]">
        <Svg w={18} h={19}>
          <path d="M9 1.500C5 1.500 3.500 4 3.500 7v4.500L1 14.500h15l-2-3V10M6.500 15c.5 3 4.500 3 5 0" stroke="#222" strokeWidth="1.400" />
          <path d="M6.500 5.500H10L6.500 10H10M12 1h4l-4 4.500h4" stroke="#222" strokeWidth="1.500" />
        </Svg>
      </button>
    </footer>
  );
}

export default function App() {
  return (
    <main className={clsx("flex min-h-screen flex-col overflow-hidden bg-[#e6e6e6]", UI)}>
      <TitleBar />
      <TabRow />
      <Ribbon />
      <FormulaBar />
      <div className="flex min-h-0 flex-1">
        <Sheet />
        <div className="ml-[3px] mr-px flex w-[19px] flex-col bg-[#dadada] pt-[2px]">
          <ScrollButton label="Desplazar arriba" turn="rotate-180" />
          <span className="h-[23px] border border-[#ababab] bg-white" />
          <span className="grow" />
          <ScrollButton label="Desplazar abajo" turn="" />
        </div>
      </div>
      <SheetTabs />
      <StatusBar />
      <Taskbar />
    </main>
  );
}
